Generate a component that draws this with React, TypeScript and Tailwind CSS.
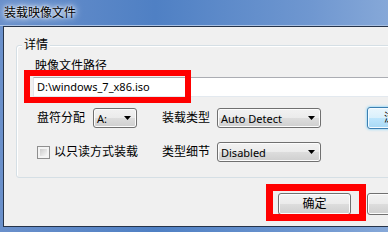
export default function App() {
  const btn =
    "flex shrink-0 items-center justify-center rounded-[3px] border border-[#707070] bg-[linear-gradient(#f2f2f2_0%,#ebebeb_50%,#dddddd_50%,#cfcfcf_100%)] shadow-[inset_0_0_0_1px_#fcfcfc] text-[12px] text-black";

  return (
    <div className="relative w-[388px] h-[232px] overflow-hidden bg-[linear-gradient(90deg,#6a90cb,#4f80c4_40%,#6f97d0_80%,#86a8d8)] font-['Segoe_UI','Noto_Sans','Noto_Sans_CJK_SC',sans-serif]">
      {/* title bar */}
      <div className="h-[26px] border-b border-[#a9c1e3] pl-[4px] text-[12px] leading-[25px] text-black [text-shadow:0_0_6px_#fff,0_0_3px_#fff,0_0_10px_#dfe9f7]">
        装载映像文件
      </div>

      {/* client area */}
      <div className="ml-[3px] w-[520px] h-[201px] border-l border-t border-b border-[#26344a] bg-[#f0f0f0] pt-[18px]">
        {/* group box */}
        <div className="relative ml-[12px] w-[500px] h-[133px] rounded-[3px] border border-[#d5dfe5] shadow-[inset_1px_1px_0_#fff]">
          <span className="absolute left-[5px] top-[-9px] bg-[#f0f0f0] px-[2px] text-[12px] leading-[16px] text-black">详情</span>

          <div className="ml-[18px] mt-[12px] text-[12px] leading-[16px] text-black">映像文件路径</div>
          <div className="ml-[16px] mt-[3px] h-[20px] w-[470px] border border-[#abadb3] border-b-[#e3e9ef] border-l-[#e2e3ea] bg-white pl-[3px] text-[11px] leading-[18px] text-black">
            D:\windows_7_x86.iso
          </div>

          {/* row 1 */}
          <div className="mt-[11px] flex h-[20px] items-center">
            <span className="ml-[20px] w-[56px] shrink-0 text-[12px] text-black">盘符分配</span>
            <Combo value="A:" w="w-[44px]" />
            <span className="ml-[25px] w-[55px] shrink-0 text-[12px] text-black">装载类型</span>
            <Combo value="Auto Detect" w="w-[104px]" />
            <div className="ml-[46px] flex h-[22px] w-[58px] shrink-0 items-center justify-center rounded-[3px] border border-[#3c7fb1] bg-[linear-gradient(#eaf6fd_0%,#d9f0fc_50%,#bee6fd_50%,#a7d9f5_100%)] shadow-[0_0_3px_#5fc8ff,inset_0_0_0_1px_#f5fbff] text-[12px] text-black">
              浏览
            </div>
          </div>

          {/* row 2 */}
          <div className="mt-[14px] flex h-[20px] items-center">
            <div className="ml-[20px] flex w-[125px] shrink-0 items-center">
              <div className="h-[13px] w-[13px] border border-[#8f8f8f] bg-[#f4f4f4] p-[2px]">
                <div className="h-full w-full bg-[linear-gradient(135deg,#cbcbcb,#f7f7f7)]" />
              </div>
              <span className="ml-[4px] text-[12px] text-black">以只读方式装载</span>
            </div>
            <span className="w-[55px] shrink-0 text-[12px] text-black">类型细节</span>
            <Combo value="Disabled" w="w-[104px]" />
          </div>
        </div>

        {/* bottom buttons */}
        <div className="ml-[274px] mt-[15px] flex gap-[16px]">
          <div className={`${btn} h-[22px] w-[73px]`}>确定</div>
          <div className={`${btn} h-[22px] w-[75px]`}>取消</div>
        </div>
      </div>

      {/* red highlight boxes */}
      <div className="absolute left-[24px] top-[70px] h-[33px] w-[167px] border-[6px] border-[#ff0000]" />
      <div className="absolute left-[266px] top-[184px] h-[37px] w-[100px] border-[7px] border-[#ff0000]" />
    </div>
  );
}

function Combo({ value, w }: { value: string; w: string }) {
  return (
    <div
      className={`${w} flex h-[20px] shrink-0 items-center justify-between rounded-[3px] border border-[#707070] bg-[linear-gradient(#f2f2f2_0%,#ebebeb_50%,#dddddd_50%,#cfcfcf_100%)] pl-[3px] pr-[5px] shadow-[inset_0_0_0_1px_#fcfcfc]`}
    >
      <span className="text-[11px] leading-none text-black">{value}</span>
      <svg width="7" height="4" viewBox="0 0 7 4">
        <path d="M0 0h7L3.5 4z" fill="#000" />
      </svg>
    </div>
  );
}
